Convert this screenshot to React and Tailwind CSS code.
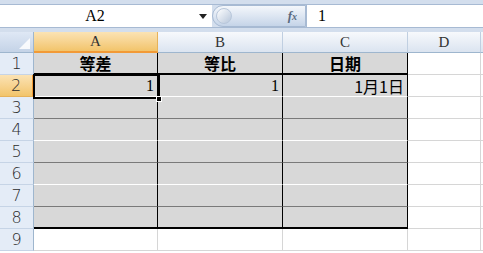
const COLS = [
  { key: "A", w: "w-[124px]" },
  { key: "B", w: "w-[125px]" },
  { key: "C", w: "w-[125px]" },
  { key: "D", w: "w-[73px]" },
];

// bottom border for the shaded block A1:C8
const ROW_BOTTOM = {
  1: "border-b-2 border-b-black",
  2: "border-b border-b-white",
  3: "border-b border-b-[#7a7a7a]",
  4: "border-b border-b-white",
  5: "border-b border-b-[#7a7a7a]",
  6: "border-b border-b-white",
  7: "border-b border-b-[#7a7a7a]",
  8: "border-b-2 border-b-black",
};

const DATA = {
  1: { A: "等差", B: "等比", C: "日期" },
  2: { A: "1", B: "1", C: "1月1日" },
};

const serif = { fontFamily: '"Liberation Serif", "Noto Sans CJK TC", serif' };
const cjk = { fontFamily: '"Noto Sans CJK TC", "Liberation Sans", sans-serif' };

function Cell({ row, col }) {
  const shaded = row <= 8 && col.key !== "D";
  const text = DATA[row]?.[col.key];

  if (!shaded) {
    return (
      <div
        className={`${col.w} h-full shrink-0 bg-white border-r border-b border-[#d6d6d6]`}
      />
    );
  }

  return (
    <div
      className={`${col.w} h-full shrink-0 bg-[#d8d8d8] border-r border-r-black ${ROW_BOTTOM[row]} flex items-center px-[3px]`}
    >
      {row === 1 && (
        <span
          className="w-full text-center text-[16px] font-bold text-black leading-none"
          style={cjk}
        >
          {text}
        </span>
      )}
      {row === 2 && (
        <span
          className="w-full text-right text-[16px] text-black leading-none"
          style={col.key === "C" ? cjk : serif}
        >
          {text}
        </span>
      )}
    </div>
  );
}

function FormulaBar() {
  return (
    <div className="h-[32px] bg-[#d3deed] pt-[4px] pb-[4px]">
      <div className="h-[24px] flex border-y border-[#a7bad3] bg-white">
        <div className="w-[212px] flex items-center relative">
          <span className="w-[190px] text-center text-[16px] text-black" style={serif}>
            A2
          </span>
          <svg className="absolute left-[199px] top-[9px]" width="8" height="5" viewBox="0 0 8 5">
            <path d="M0 0 H8 L4 5 Z" fill="#222" />
          </svg>
        </div>
        <div className="w-[94px] flex items-center bg-[#d3deed]">
          <div className="h-full w-full rounded-l-full bg-gradient-to-b from-[#f4f7fb] via-[#dde6f2] to-[#c5d4e8] border border-[#a7bad3] flex items-center justify-between pl-[3px] pr-[8px]">
            <div className="w-[16px] h-[16px] rounded-full bg-gradient-to-br from-[#ffffff] to-[#b7c6da] border border-[#b8c7db]" />
            <span className="text-[13px] italic font-bold text-[#5a6b80]" style={serif}>
              f<span className="text-[10px]">x</span>
            </span>
          </div>
        </div>
        <div className="flex-1 flex items-center pl-[11px] border-l border-[#a7bad3]">
          <span className="text-[16px] text-black" style={serif}>1</span>
        </div>
      </div>
    </div>
  );
}

function HeaderRow() {
  return (
    <div className="flex h-[21px]">
      <div className="w-[34px] shrink-0 h-full bg-gradient-to-b from-[#dfe8f5] to-[#c4d3e7] border-r border-b border-[#9eb6ce] relative">
        <svg className="absolute right-[3px] bottom-[3px]" width="11" height="11" viewBox="0 0 11 11">
          <path d="M11 0 V11 H0 Z" fill="#ffffff" opacity="0.85" />
        </svg>
      </div>
      {COLS.map((c) =>
        c.key === "A" ? (
          <div
            key={c.key}
            className={`${c.w} shrink-0 h-full bg-gradient-to-b from-[#fbe3b4] to-[#f2c46a] border-r border-r-[#e6b25a] border-b-2 border-b-[#f29a36] flex items-center justify-center text-[15px] text-[#333]`}
            style={serif}
          >
            {c.key}
          </div>
        ) : (
          <div
            key={c.key}
            className={`${c.w} shrink-0 h-full bg-gradient-to-b from-[#f7f9fc] to-[#dbe4f0] border-r border-r-[#c0cfe1] border-b border-b-[#9eb6ce] flex items-center justify-center text-[15px] text-[#333]`}
            style={serif}
          >
            {c.key}
          </div>
        )
      )}
      <div className="flex-1 h-full bg-gradient-to-b from-[#f7f9fc] to-[#dbe4f0] border-b border-[#9eb6ce]" />
    </div>
  );
}

function Row({ row }) {
  const selected = row === 2;
  return (
    <div className="flex h-[22px]">
      <div
        className={`w-[34px] shrink-0 h-full flex items-center justify-center text-[16px] text-[#2b2b2b] ${
          selected
            ? "bg-gradient-to-b from-[#fbe3b4] to-[#f2c46a] border-r-2 border-r-[#f29a36] border-b border-b-[#e6b25a]"
            : "bg-[#e4ecf7] border-r border-r-[#9eb6ce] border-b border-b-[#c6d4e6]"
        }`}
        style={{ fontFamily: '"DejaVu Sans", sans-serif', fontWeight: 300 }}
      >
        {row}
      </div>
      {COLS.map((c) => (
        <Cell key={c.key} row={row} col={c} />
      ))}
      <div className="flex-1 h-full bg-white border-b border-[#d6d6d6]" />
    </div>
  );
}

export default function App() {
  return (
    <div className="w-[483px] h-[253px] overflow-hidden bg-white relative">
      <FormulaBar />
      <HeaderRow />
      {[1, 2, 3, 4, 5, 6, 7, 8, 9].map((r) => (
        <Row key={r} row={r} />
      ))}

      {/* active cell A2 */}
      <div className="absolute left-[33px] top-[74px] w-[127px] h-[25px] border-2 border-black pointer-events-none" />
      <div className="absolute left-[156px] top-[96px] w-[6px] h-[6px] bg-black border border-white" />
    </div>
  );
}
